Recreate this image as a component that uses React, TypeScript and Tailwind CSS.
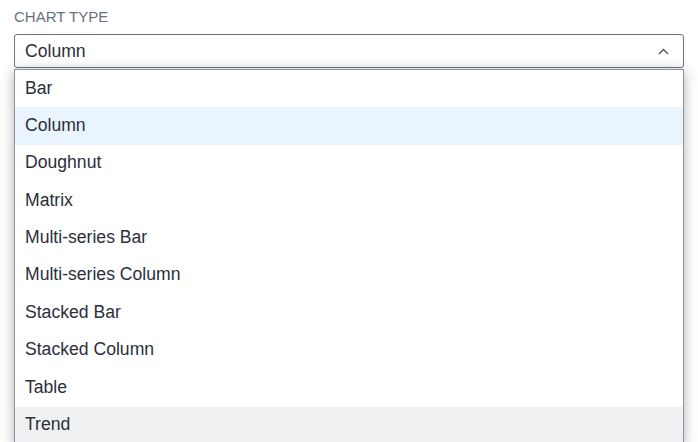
import { useState } from "react";

const chartTypes = [
  "Bar",
  "Column",
  "Doughnut",
  "Matrix",
  "Multi-series Bar",
  "Multi-series Column",
  "Stacked Bar",
  "Stacked Column",
  "Table",
  "Trend",
];

const ChevronUp = () => (
  <svg width="11" height="7" viewBox="0 0 11 7" fill="none">
    <path d="M1 6L5.5 1.5L10 6" stroke="#4b5060" strokeWidth="1.3" />
  </svg>
);

export default function App() {
  const [selected] = useState("Column");
  const hovered = "Trend";

  return (
    <div className="h-[442px] w-[698px] overflow-hidden bg-white font-['Liberation_Sans',Arial,sans-serif]">
      <div className="px-[14px] pt-[8px]">
        <div className="text-[15px] leading-[17px] text-[#6b6f7c]">CHART TYPE</div>
        <div className="relative mt-[9px]">
          <div className="flex h-[34px] items-center justify-between rounded-[3px] border border-[#6f7380] pl-[10px] pr-[14px] text-[17.6px] text-[#2b2f3a]">
            <span>{selected}</span>
            <ChevronUp />
          </div>
          <ul className="relative z-10 mt-px border border-[#8e929c] bg-white shadow-[0_2px_12px_rgba(30,35,50,0.35)]">
            {chartTypes.map((t) => (
              <li
                key={t}
                className={`flex h-[37.4px] items-center pb-[2px] pl-[10px] text-[17.6px] text-[#2b2f3a] ${
                  t === selected ? "bg-[#eaf4fd]" : t === hovered ? "bg-[#eff0f2]" : ""
                }`}
              >
                {t}
              </li>
            ))}
          </ul>
        </div>
      </div>
    </div>
  );
}
